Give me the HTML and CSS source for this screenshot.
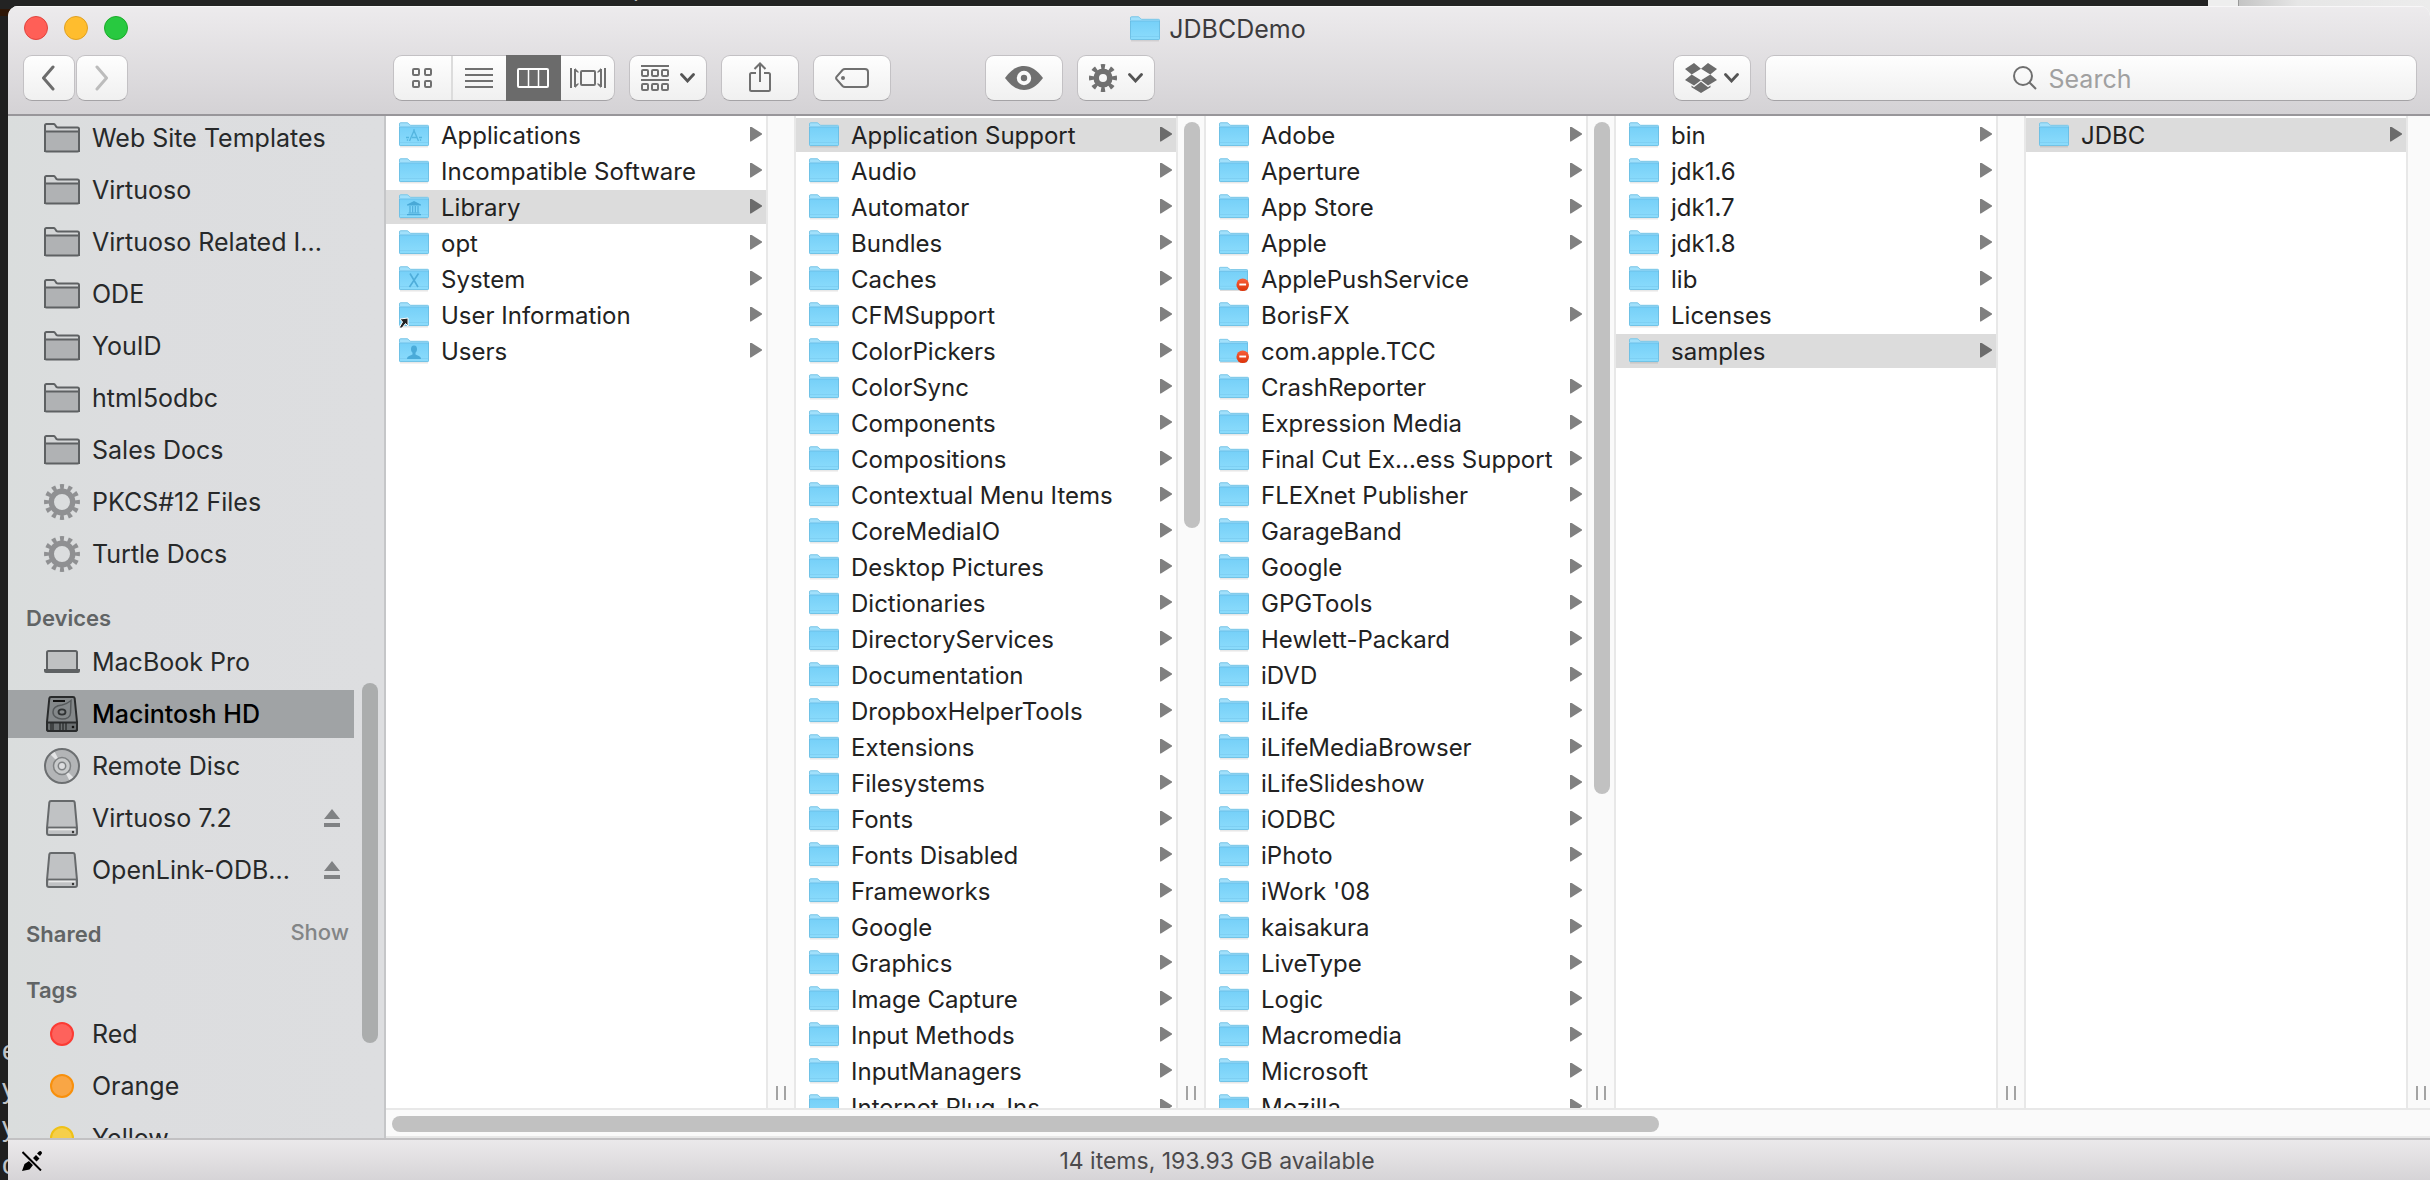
FILE: index.html
```html
<!DOCTYPE html>
<html lang="en">
<head>
<meta charset="utf-8">
<title>JDBCDemo</title>
<link rel="stylesheet" href="styles.css">
</head>
<body>
<svg class="symbols" aria-hidden="true">
  <defs>
    <linearGradient id="sky" x1="0" y1="0" x2="0" y2="1"><stop offset="0" stop-color="#76d0f8"/><stop offset="1" stop-color="#8cdcfc"/></linearGradient>
    <linearGradient id="alert" x1="0" y1="0" x2="0" y2="1"><stop offset="0" stop-color="#f9603a"/><stop offset="1" stop-color="#dc3208"/></linearGradient>
  </defs>
  <symbol id="folder" viewBox="0 0 30 26">
    <path d="M1 24.5h28v.8H1z" fill="#000" opacity=".18"/>
    <path d="M0 2Q0 .5 1.500 .5H8q1 0 1.700.8L11 2.700q.4.3 1 .3h16.500Q30 3 30 4.500V22H0z" fill="#a1e0fb"/>
    <path d="M.5 4V2Q.5.8 1.600.8H8q.8 0 1.400.6L10.700 2.800q.5.500 1.200.5H28.500q1 0 1 1.200" fill="none" stroke="#7cc6e6"/>
    <path d="M0 5h30v17.500q0 1.500-1.500 1.500h-27Q0 24 0 22.500z" fill="url(#sky)"/>
    <path d="M0 5h30" stroke="#6cc0e8"/>
    <path d="M.5 5v17.500q0 1 1 1h27q1 0 1-1V5" fill="none" stroke="#66b8dd" opacity=".7"/>
    <path d="M1 20.500h28" stroke="#7accf1" opacity=".7"/>
  </symbol>
  <symbol id="folder-apps" viewBox="0 0 30 26"><use href="#folder" width="30" height="26"/><path d="M10.500 19 15.500 7.500M14.500 7.500 19.500 19M7 15.500h3M13 15.500h5M20 15.500h3M8 18.500l1-1M22 18.500l-1-1" stroke="#55b6e0" stroke-width="1.400" fill="none"/></symbol>
  <symbol id="folder-library" viewBox="0 0 30 26"><use href="#folder" width="30" height="26"/><path d="M8 10.500 15 7l7 3.500v1H8zM9.500 18.500h11v1h-11zM8 20h14v1.200H8z" fill="#49a9d7"/><path d="M11 12v6.500M13.700 12v6.500M16.300 12v6.500M19 12v6.500" stroke="#49a9d7" stroke-width="1.100"/></symbol>
  <symbol id="folder-system" viewBox="0 0 30 26"><use href="#folder" width="30" height="26"/><path d="M11 7.500l8 13.500M19.500 7.500l-9 13.500" stroke="#4fadda" stroke-width="1.600"/></symbol>
  <symbol id="folder-alias" viewBox="0 0 30 26"><use href="#folder" width="30" height="26"/><path d="M1 17l8-1v8l-2.500-2.500L3 26H0l3.500-6z" fill="#222" stroke="#fff" stroke-width="1"/></symbol>
  <symbol id="folder-users" viewBox="0 0 30 26"><use href="#folder" width="30" height="26"/><path d="M15 7.500c2.200 0 3 1.600 3 3.500 0 1.700-.6 2.800-1.500 3.700v1.800c1.500 1 5.500 1.200 5.500 4.500H8c0-3.300 4-3.500 5.500-4.500v-1.800C12.600 13.800 12 12.700 12 11c0-1.900.8-3.500 3-3.500z" fill="#4aabd9"/></symbol>
  <symbol id="folder-locked" viewBox="0 0 31 26"><use href="#folder" width="30" height="26"/><circle cx="24.500" cy="19" r="6.500" fill="url(#alert)"/><path d="M21 18.700h7" stroke="#fff" stroke-width="2"/></symbol>
  <symbol id="side-folder" viewBox="0 0 36 30">
    <path d="M1 28V2.500Q1 1 2.500 1h7q1 0 1.500.8L12.500 4q.5.500 1.500.5h19.500q1.500 0 1.500 1.500v22z" fill="#d3d5d6" stroke="#5e6163" stroke-width="2"/>
    <path d="M1 8.500h34V27q0 1.500-1.500 1.500h-31Q1 28.500 1 27z" fill="#b0b2b4" stroke="#5e6163" stroke-width="2"/>
  </symbol>
  <symbol id="side-gear" viewBox="0 0 36 36">
    <circle cx="18" cy="18" r="10.700" fill="none" stroke="#8f9092" stroke-width="5.400"/>
    <circle cx="18" cy="18" r="15.200" fill="none" stroke="#8f9092" stroke-width="5.500" pathLength="24" stroke-dasharray="1 1" stroke-dashoffset=".5"/>
  </symbol>
  <symbol id="laptop" viewBox="0 0 36 24"><rect x="3" y="1" width="30" height="19" rx="1.500" fill="#bfc1c2" stroke="#5e6163" stroke-width="2"/><path d="M0 19h36v2q0 2-2 2H2q-2 0-2-2z" fill="#5e6163"/></symbol>
  <symbol id="hard-disk" viewBox="0 0 32 36">
    <path d="M5 1h22q1.500 0 1.700 1.500L31 26v7q0 2-2 2H3q-2 0-2-2v-7L3.300 2.500Q3.500 1 5 1z" fill="#84888a" stroke="#292b2c" stroke-width="2"/>
    <path d="M1 26.500h30V33q0 2-2 2H3q-2 0-2-2z" fill="#6b6f71" stroke="#292b2c" stroke-width="2"/>
    <path d="M7 5h12" stroke="#111" stroke-width="2"/>
    <path d="M25 4.500 24.500 17c0 4-4 6-8.500 6s-9-2.500-9-7 4-6.500 9-7c3-.5 5-1.500 9-4.500z" fill="none" stroke="#55595b" stroke-width="1.500"/>
    <ellipse cx="16" cy="16" rx="3.500" ry="2.700" fill="none" stroke="#303334" stroke-width="1.800"/>
    <path d="M5 27v7M7 27v7M14 27v7M17 27v7M20 27v7" stroke="#292b2c" stroke-width="1.300"/><circle cx="27" cy="31" r="1.300" fill="#151515"/>
  </symbol>
  <symbol id="disc" viewBox="0 0 36 36">
    <circle cx="18" cy="18" r="17" fill="#b3b5b7"/>
    <path d="M18 18 6 6l4-3.500zM18 18l12 12-4 3.500z" fill="#e3e4e5"/>
    <circle cx="18" cy="18" r="17" fill="none" stroke="#6c6f71" stroke-width="2"/>
    <circle cx="18" cy="18" r="8.500" fill="#c9cbcc" stroke="#7e8183" stroke-width="1.500"/><circle cx="18" cy="18" r="3.700" fill="#dcdddf" stroke="#7e8183" stroke-width="1.500"/>
  </symbol>
  <symbol id="drive" viewBox="0 0 32 36">
    <path d="M5 1h22q1.500 0 1.700 1.500L31 28v5q0 2-2 2H3q-2 0-2-2v-5L3.300 2.500Q3.500 1 5 1z" fill="#c0c2c4" stroke="#66696b" stroke-width="2"/>
    <path d="M2 27.500h28" stroke="#66696b" stroke-width="1.800"/><path d="M3 29.500h26" stroke="#e9eaea" stroke-width="1.600"/><circle cx="27" cy="32" r="1.200" fill="#333"/>
  </symbol>
  <symbol id="eject" viewBox="0 0 16 18"><path d="M8 0l8 10H0zM0 14h16v4H0z" fill="#808284"/></symbol>
  <symbol id="chevron" viewBox="0 0 15 10"><path d="M1.500 1.500l6 6.500 6-6.500" fill="none" stroke="#555" stroke-width="2.800" stroke-linecap="round"/></symbol>
</svg>

<div class="desktop" aria-hidden="true">
  <div class="backdrop-pane"></div>
  <p class="terminal-top">p</p>
  <p class="terminal-text">e<br>y<br>y<br>c</p>
</div>

<main class="window">
  <header class="titlebar">
    <div class="title-row">
      <div class="lights">
        <button class="light close" aria-label="Close"></button>
        <button class="light minimize" aria-label="Minimize"></button>
        <button class="light maximize" aria-label="Zoom"></button>
      </div>
      <h1 class="title"><svg class="folder" viewBox="0 0 30 26"><use href="#folder"/></svg>JDBCDemo</h1>
    </div>
    <div class="toolbar">
      <div class="history">
        <button class="btn back" aria-label="Back"><svg width="14" height="26" viewBox="0 0 14 26"><path d="M12 2 2.500 13 12 24" fill="none" stroke="#6c6c6c" stroke-width="3" stroke-linecap="round" stroke-linejoin="round"/></svg></button>
        <button class="btn forward" aria-label="Forward"><svg width="14" height="26" viewBox="0 0 14 26"><path d="M2 2l9.500 11L2 24" fill="none" stroke="#bcbcbc" stroke-width="3" stroke-linecap="round" stroke-linejoin="round"/></svg></button>
      </div>
      <div class="views">
        <button class="view icons" aria-label="Icons"><svg width="20" height="20" viewBox="0 0 20 20" fill="none" stroke="#707070" stroke-width="2"><rect x="1" y="1" width="6" height="6" rx="1"/><rect x="13" y="1" width="6" height="6" rx="1"/><rect x="1" y="13" width="6" height="6" rx="1"/><rect x="13" y="13" width="6" height="6" rx="1"/></svg></button>
        <button class="view" aria-label="List"><svg width="28" height="20" viewBox="0 0 28 20"><path d="M0 1h28M0 7h28M0 13h28M0 19h28" stroke="#707070" stroke-width="2"/></svg></button>
        <button class="view active" aria-label="Columns" aria-pressed="true"><svg width="32" height="20" viewBox="0 0 32 20"><rect x="1" y="1" width="30" height="18" rx="1" fill="none" stroke="#fff" stroke-width="2"/><path d="M11.500 1v18M21.500 1v18" stroke="#fff" stroke-width="1.500"/></svg></button>
        <button class="view" aria-label="Cover Flow"><svg width="36" height="20" viewBox="0 0 36 20"><path d="M1 0v20M35 0v20M5 1v18M31 1v18" stroke="#707070" stroke-width="2"/><path d="M5 0l3.500 3.500V5L5 3zM5 20l3.500-3.500V15L5 17zM31 0l-3.500 3.500V5L31 3zM31 20l-3.500-3.500V15L31 17z" fill="#707070"/><rect x="11" y="3" width="14" height="14" rx="1" fill="none" stroke="#707070" stroke-width="2"/></svg></button>
      </div>
      <button class="btn" aria-label="Arrange"><svg width="28" height="26" viewBox="0 0 28 26" fill="none" stroke="#707070" stroke-width="2"><path d="M0 1h28M0 15h28"/><rect x="1" y="5" width="6" height="6" rx="1"/><rect x="11" y="5" width="6" height="6" rx="1"/><rect x="21" y="5" width="6" height="6" rx="1"/><rect x="1" y="19" width="6" height="6" rx="1"/><rect x="11" y="19" width="6" height="6" rx="1"/><rect x="21" y="19" width="6" height="6" rx="1"/></svg><svg class="chevron"><use href="#chevron"/></svg></button>
      <button class="btn" aria-label="Share"><svg width="22" height="32" viewBox="0 0 22 32" fill="none" stroke="#707070" stroke-width="2"><path d="M7 11H2.500Q1 11 1 12.500v15Q1 29 2.500 29h17q1.500 0 1.500-1.500v-15Q21 11 19.500 11H15M11 20V1.500M5.500 7 11 1.500 16.500 7"/></svg></button>
      <button class="btn" aria-label="Tags"><svg width="34" height="20" viewBox="0 0 34 20" fill="none" stroke="#707070" stroke-width="2"><path d="M10 1h20q3 0 3 3v12q0 3-3 3H10q-1.500 0-2.500-1L1.500 11.200q-.8-1.200 0-2.400L7.500 2Q8.500 1 10 1z"/><circle cx="8" cy="10" r="2" fill="#707070" stroke="none"/></svg></button>
      <button class="btn quicklook" aria-label="Quick Look"><svg width="38" height="24" viewBox="0 0 38 24"><path d="M0 12C6 4 12 0 19 0s13 4 19 12c-6 8-12 12-19 12S6 20 0 12z" fill="#707070"/><circle cx="19" cy="12" r="5.200" fill="none" stroke="#fafafa" stroke-width="4"/></svg></button>
      <button class="btn" aria-label="Action"><svg width="28" height="28" viewBox="0 0 28 28" fill="none" stroke="#707070"><circle cx="14" cy="14" r="6.800" stroke-width="5.600"/><circle cx="14" cy="14" r="11.300" stroke-width="5.400" pathLength="16" stroke-dasharray=".9 1.100" stroke-dashoffset=".45"/></svg><svg class="chevron"><use href="#chevron"/></svg></button>
      <button class="btn dropbox" aria-label="Dropbox"><svg width="32" height="30" viewBox="0 0 32 30" fill="#6b6b6b"><path d="M9 0l7 5.700L6.700 11.500 0 6zM23 0l-7 5.700 9.300 5.800L32 6zM0 17l6.700-5.500L16 17.200 9 22.500zM32 17l-6.700-5.500L16 17.200l7 5.300zM16 18.800l7 5.400 2.500-1.700v1.700L16 30l-9.500-5.800v-1.700L9 24.200z"/></svg><svg class="chevron"><use href="#chevron"/></svg></button>
      <label class="search"><svg width="24" height="24" viewBox="0 0 24 24" fill="none" stroke="#6f6f6f" stroke-width="2"><circle cx="10" cy="10" r="9"/><path d="M16.500 16.500 23 23"/></svg><input type="search" placeholder="Search" aria-label="Search"></label>
    </div>
  </header>

  <div class="content">
    <aside class="sidebar">
      <nav class="side-list">
        <a class="side-row" href="#"><span class="slot"><svg width="36" height="30"><use href="#side-folder"/></svg></span>Web Site Templates</a>
        <a class="side-row" href="#"><span class="slot"><svg width="36" height="30"><use href="#side-folder"/></svg></span>Virtuoso</a>
        <a class="side-row" href="#"><span class="slot"><svg width="36" height="30"><use href="#side-folder"/></svg></span>Virtuoso Related I...</a>
        <a class="side-row" href="#"><span class="slot"><svg width="36" height="30"><use href="#side-folder"/></svg></span>ODE</a>
        <a class="side-row" href="#"><span class="slot"><svg width="36" height="30"><use href="#side-folder"/></svg></span>YouID</a>
        <a class="side-row" href="#"><span class="slot"><svg width="36" height="30"><use href="#side-folder"/></svg></span>html5odbc</a>
        <a class="side-row" href="#"><span class="slot"><svg width="36" height="30"><use href="#side-folder"/></svg></span>Sales Docs</a>
        <a class="side-row" href="#"><span class="slot"><svg width="36" height="36"><use href="#side-gear"/></svg></span>PKCS#12 Files</a>
        <a class="side-row" href="#"><span class="slot"><svg width="36" height="36"><use href="#side-gear"/></svg></span>Turtle Docs</a>
        <h2 class="side-head">Devices</h2>
        <a class="side-row" href="#"><span class="slot"><svg width="36" height="24"><use href="#laptop"/></svg></span>MacBook Pro</a>
        <a class="side-row current" href="#" aria-current="true"><span class="slot"><svg width="32" height="36"><use href="#hard-disk"/></svg></span>Macintosh HD</a>
        <a class="side-row" href="#"><span class="slot"><svg width="36" height="36"><use href="#disc"/></svg></span>Remote Disc</a>
        <a class="side-row" href="#"><span class="slot"><svg width="32" height="36"><use href="#drive"/></svg></span>Virtuoso 7.2<svg class="eject"><use href="#eject"/></svg></a>
        <a class="side-row" href="#"><span class="slot"><svg width="32" height="36"><use href="#drive"/></svg></span>OpenLink-ODB...<svg class="eject"><use href="#eject"/></svg></a>
        <h2 class="side-head">Shared <button class="show">Show</button></h2>
        <h2 class="side-head">Tags</h2>
        <a class="side-row" href="#"><span class="slot"><i class="tag red"></i></span>Red</a>
        <a class="side-row" href="#"><span class="slot"><i class="tag orange"></i></span>Orange</a>
        <a class="side-row" href="#"><span class="slot"><i class="tag yellow"></i></span>Yellow</a>
      </nav>
      <div class="side-track"><div class="thumb"></div></div>
    </aside>

    <div class="browser">
      <div class="columns">
        <div class="column">
          <a class="row" href="#"><svg class="folder"><use href="#folder-apps"/></svg>Applications</a>
          <a class="row" href="#"><svg class="folder"><use href="#folder"/></svg>Incompatible Software</a>
          <a class="row selected" href="#"><svg class="folder"><use href="#folder-library"/></svg>Library</a>
          <a class="row" href="#"><svg class="folder"><use href="#folder"/></svg>opt</a>
          <a class="row" href="#"><svg class="folder"><use href="#folder-system"/></svg>System</a>
          <a class="row" href="#"><svg class="folder"><use href="#folder-alias"/></svg>User Information</a>
          <a class="row" href="#"><svg class="folder"><use href="#folder-users"/></svg>Users</a>
        </div>
        <div class="gutter"><span class="grip"></span></div>

        <div class="column">
          <a class="row selected" href="#"><svg class="folder"><use href="#folder"/></svg>Application Support</a>
          <a class="row" href="#"><svg class="folder"><use href="#folder"/></svg>Audio</a>
          <a class="row" href="#"><svg class="folder"><use href="#folder"/></svg>Automator</a>
          <a class="row" href="#"><svg class="folder"><use href="#folder"/></svg>Bundles</a>
          <a class="row" href="#"><svg class="folder"><use href="#folder"/></svg>Caches</a>
          <a class="row" href="#"><svg class="folder"><use href="#folder"/></svg>CFMSupport</a>
          <a class="row" href="#"><svg class="folder"><use href="#folder"/></svg>ColorPickers</a>
          <a class="row" href="#"><svg class="folder"><use href="#folder"/></svg>ColorSync</a>
          <a class="row" href="#"><svg class="folder"><use href="#folder"/></svg>Components</a>
          <a class="row" href="#"><svg class="folder"><use href="#folder"/></svg>Compositions</a>
          <a class="row" href="#"><svg class="folder"><use href="#folder"/></svg>Contextual Menu Items</a>
          <a class="row" href="#"><svg class="folder"><use href="#folder"/></svg>CoreMediaIO</a>
          <a class="row" href="#"><svg class="folder"><use href="#folder"/></svg>Desktop Pictures</a>
          <a class="row" href="#"><svg class="folder"><use href="#folder"/></svg>Dictionaries</a>
          <a class="row" href="#"><svg class="folder"><use href="#folder"/></svg>DirectoryServices</a>
          <a class="row" href="#"><svg class="folder"><use href="#folder"/></svg>Documentation</a>
          <a class="row" href="#"><svg class="folder"><use href="#folder"/></svg>DropboxHelperTools</a>
          <a class="row" href="#"><svg class="folder"><use href="#folder"/></svg>Extensions</a>
          <a class="row" href="#"><svg class="folder"><use href="#folder"/></svg>Filesystems</a>
          <a class="row" href="#"><svg class="folder"><use href="#folder"/></svg>Fonts</a>
          <a class="row" href="#"><svg class="folder"><use href="#folder"/></svg>Fonts Disabled</a>
          <a class="row" href="#"><svg class="folder"><use href="#folder"/></svg>Frameworks</a>
          <a class="row" href="#"><svg class="folder"><use href="#folder"/></svg>Google</a>
          <a class="row" href="#"><svg class="folder"><use href="#folder"/></svg>Graphics</a>
          <a class="row" href="#"><svg class="folder"><use href="#folder"/></svg>Image Capture</a>
          <a class="row" href="#"><svg class="folder"><use href="#folder"/></svg>Input Methods</a>
          <a class="row" href="#"><svg class="folder"><use href="#folder"/></svg>InputManagers</a>
          <a class="row" href="#"><svg class="folder"><use href="#folder"/></svg>Internet Plug-Ins</a>
        </div>
        <div class="gutter"><div class="thumb second"></div><span class="grip"></span></div>

        <div class="column">
          <a class="row" href="#"><svg class="folder"><use href="#folder"/></svg>Adobe</a>
          <a class="row" href="#"><svg class="folder"><use href="#folder"/></svg>Aperture</a>
          <a class="row" href="#"><svg class="folder"><use href="#folder"/></svg>App Store</a>
          <a class="row" href="#"><svg class="folder"><use href="#folder"/></svg>Apple</a>
          <a class="row locked" href="#"><svg class="folder"><use href="#folder-locked"/></svg>ApplePushService</a>
          <a class="row" href="#"><svg class="folder"><use href="#folder"/></svg>BorisFX</a>
          <a class="row locked" href="#"><svg class="folder"><use href="#folder-locked"/></svg>com.apple.TCC</a>
          <a class="row" href="#"><svg class="folder"><use href="#folder"/></svg>CrashReporter</a>
          <a class="row" href="#"><svg class="folder"><use href="#folder"/></svg>Expression Media</a>
          <a class="row" href="#"><svg class="folder"><use href="#folder"/></svg>Final Cut Ex...ess Support</a>
          <a class="row" href="#"><svg class="folder"><use href="#folder"/></svg>FLEXnet Publisher</a>
          <a class="row" href="#"><svg class="folder"><use href="#folder"/></svg>GarageBand</a>
          <a class="row" href="#"><svg class="folder"><use href="#folder"/></svg>Google</a>
          <a class="row" href="#"><svg class="folder"><use href="#folder"/></svg>GPGTools</a>
          <a class="row" href="#"><svg class="folder"><use href="#folder"/></svg>Hewlett-Packard</a>
          <a class="row" href="#"><svg class="folder"><use href="#folder"/></svg>iDVD</a>
          <a class="row" href="#"><svg class="folder"><use href="#folder"/></svg>iLife</a>
          <a class="row" href="#"><svg class="folder"><use href="#folder"/></svg>iLifeMediaBrowser</a>
          <a class="row" href="#"><svg class="folder"><use href="#folder"/></svg>iLifeSlideshow</a>
          <a class="row" href="#"><svg class="folder"><use href="#folder"/></svg>iODBC</a>
          <a class="row" href="#"><svg class="folder"><use href="#folder"/></svg>iPhoto</a>
          <a class="row" href="#"><svg class="folder"><use href="#folder"/></svg>iWork '08</a>
          <a class="row" href="#"><svg class="folder"><use href="#folder"/></svg>kaisakura</a>
          <a class="row" href="#"><svg class="folder"><use href="#folder"/></svg>LiveType</a>
          <a class="row" href="#"><svg class="folder"><use href="#folder"/></svg>Logic</a>
          <a class="row" href="#"><svg class="folder"><use href="#folder"/></svg>Macromedia</a>
          <a class="row" href="#"><svg class="folder"><use href="#folder"/></svg>Microsoft</a>
          <a class="row" href="#"><svg class="folder"><use href="#folder"/></svg>Mozilla</a>
        </div>
        <div class="gutter"><div class="thumb third"></div><span class="grip"></span></div>

        <div class="column">
          <a class="row" href="#"><svg class="folder"><use href="#folder"/></svg>bin</a>
          <a class="row" href="#"><svg class="folder"><use href="#folder"/></svg>jdk1.6</a>
          <a class="row" href="#"><svg class="folder"><use href="#folder"/></svg>jdk1.7</a>
          <a class="row" href="#"><svg class="folder"><use href="#folder"/></svg>jdk1.8</a>
          <a class="row" href="#"><svg class="folder"><use href="#folder"/></svg>lib</a>
          <a class="row" href="#"><svg class="folder"><use href="#folder"/></svg>Licenses</a>
          <a class="row selected" href="#"><svg class="folder"><use href="#folder"/></svg>samples</a>
        </div>
        <div class="gutter"><span class="grip"></span></div>

        <div class="column">
          <a class="row selected" href="#"><svg class="folder"><use href="#folder"/></svg>JDBC</a>
        </div>
        <div class="gutter"><span class="grip"></span></div>
      </div>
      <div class="scrollbar"><div class="thumb"></div></div>
    </div>
  </div>

  <footer class="statusbar">
    <svg class="readonly" viewBox="0 0 20 20"><path d="M0 20l2.500-7 4.500-3 4 4-3.500 4.500zM11 7l3-3 3.500 3.500-3 3zM15 2.500 17 .500q1.500-1 2.500.3t0 2.200L18 5z" fill="#000"/><path d="M1 1l18.500 18.500" stroke="#e4e0e2" stroke-width="4"/><path d="M.5 1l18.500 18.500" stroke="#000" stroke-width="2"/></svg>
    <span class="status">14 items, 193.93 GB available</span>
  </footer>
</main>
</body>
</html>
```
FILE: styles.css
```css
* { box-sizing: border-box; }

body {
  margin: 0;
  height: 100vh;
  overflow: hidden;
  background: #1f1f1f;
  font-family: Inter, "Liberation Sans", sans-serif;
  font-size: 24px;
  color: #222;
}

button, input { font: inherit; color: inherit; margin: 0; padding: 0; border: 0; background: none; }
a { color: inherit; text-decoration: none; }
h1, h2, p { margin: 0; font-weight: 400; }
svg { display: block; flex: none; }
.symbols { position: absolute; width: 0; height: 0; }

/* What shows behind the window */
.desktop {
  position: absolute;
  inset: 0;
  overflow: hidden;
  background: linear-gradient(#232323 9px, #2e1606 9px, #2e1606 16px, #1f1f1f 16px);
}
.backdrop-pane {
  position: absolute;
  top: 0;
  right: 0;
  width: 222px;
  height: 20px;
  background: linear-gradient(90deg, #eee 30px, #999 30px, #999 31px, #c4c4c4 31px, #e6e6e6 90px, #ececec);
}
.terminal-top { position: absolute; top: -30px; left: 633px; line-height: 36px; color: #ddd; }
.terminal-text {
  position: absolute;
  left: 2px;
  bottom: -4px;
  font: 28px/38px "Liberation Sans", sans-serif;
  color: #bfc3c8;
}

.window {
  position: relative;
  display: flex;
  flex-direction: column;
  height: calc(100vh - 6px);
  margin: 6px 0 0 8px;
  border-radius: 10px 10px 0 0;
  overflow: hidden;
  background: #fff;
}

/* Title bar and toolbar */
.titlebar {
  flex: none;
  background: linear-gradient(#edebed, #d4d2d5);
  border-bottom: 2px solid #98969a;
  box-shadow: inset 0 1px #f8f7f8;
}
.title-row {
  display: grid;
  grid-template-columns: 1fr auto 1fr;
  align-items: center;
  height: 44px;
  padding-right: 2px;
}
.lights { display: flex; gap: 16px; padding-left: 16px; }
.light { width: 24px; height: 24px; border-radius: 50%; border: 1px solid #e0443e; background: #ff5f57; }
.minimize { border-color: #dfa023; background: #ffbd2e; }
.maximize { border-color: #1aab29; background: #28c940; }
.title { display: flex; align-items: center; gap: 9px; font-size: 25px; line-height: 32px; padding-top: 1px; color: #3c3b3d; }

.toolbar { display: flex; gap: 14px; padding: 5px 13px 13px 15px; }
.toolbar .chevron { width: 15px; height: 10px; }
.btn, .search, .views {
  height: 46px;
  border: 1px solid #c3c1c4;
  border-bottom-color: #a5a3a6;
  border-radius: 9px;
  background: linear-gradient(#fefefe, #f0f0f0);
}
.btn {
  display: flex;
  align-items: center;
  justify-content: center;
  gap: 11px;
  width: 78px;
}
.history { display: flex; gap: 1px; margin-right: 251px; }
.history .btn { width: 52px; }
.back { padding-right: 3px; }
.views { display: flex; width: 222px; }
.view { display: flex; flex: 53; align-items: center; justify-content: center; }
.icons { flex: 57; border-right: 2px solid #dcdcdc; }
.view.active { flex: 56; margin: -1px 0; background: #6b6b6b; }
.quicklook { margin-left: 80px; }
.dropbox { margin-left: auto; gap: 7px; }
.search {
  display: flex;
  align-items: center;
  justify-content: center;
  gap: 12px;
  width: 652px;
  padding-left: 1px;
  font-size: 25px;
}
.search input { width: 122px; padding-top: 1px; outline: 0; appearance: none; }
.search input::placeholder { color: #a0a0a0; opacity: 1; }

/* Sidebar */
.content { display: flex; flex: 1; min-height: 0; }
.sidebar {
  display: flex;
  flex: none;
  width: 378px;
  overflow: hidden;
  border-right: 2px solid #c5c6c8;
  background: linear-gradient(90deg, #dadddd, #dcdddf 30%, #dddee0);
}
.side-list { flex: 1; min-width: 0; margin-top: -4px; }
.side-row {
  display: flex;
  align-items: center;
  gap: 12px;
  height: 48px;
  margin: 2px 0;
  padding: 0 14px 0 36px;
  font-size: 25px;
  line-height: 32px;
  color: #27292a;
}
.side-row:first-child { margin-top: 0; padding-top: 2px; height: 50px; }
.side-row + .side-row { margin-top: 4px; }
.side-row.current { background: #a0a3a5; color: #000; font-weight: 500; }
.slot { display: flex; flex: none; justify-content: center; width: 36px; }
.eject { width: 16px; height: 18px; margin-left: auto; }
.side-head {
  display: flex;
  justify-content: space-between;
  height: 56px;
  padding: 20px 5px 0 18px;
  font-size: 22px;
  font-weight: 600;
  line-height: 36px;
  color: #616465;
}
.show { height: 32px; line-height: 32px; color: #838586; font-weight: 500; }
.tag { width: 24px; height: 24px; border-radius: 50%; border: 2px solid; }
.red { border-color: #fb3b34; background: #fe625c; }
.orange { border-color: #f8900c; background: #f9a645; }
.yellow { border-color: #efc116; background: #f5cf4b; }

.thumb { width: 16px; border-radius: 8px; background: #c1c1c1; }
.side-track { display: flex; flex-direction: column; flex: none; width: 30px; padding-left: 8px; }
.side-track::before { content: ""; flex: 567; }
.side-track .thumb { flex: 360; background: #abadad; }
.side-track::after { content: ""; flex: 95; }

/* Column browser */
.browser { display: flex; flex-direction: column; flex: 1; min-width: 0; }
.columns { display: flex; flex: 1; min-height: 0; overflow: hidden; }
.column { flex: none; width: 380px; padding-top: 2px; overflow: hidden; }
.row {
  display: flex;
  align-items: center;
  gap: 12px;
  height: 34px;
  margin-bottom: 2px;
  padding: 0 4px 0 13px;
  white-space: nowrap;
}
.folder { width: 30px; height: 26px; }
.row::after {
  content: "";
  width: 12px;
  height: 15px;
  margin: 0 0 2px auto;
  background: #808080;
  clip-path: polygon(0 0, 8% 0, 100% 46%, 100% 54%, 8% 100%, 0 100%);
}
.row.selected { background: #dcdcdc; }
.row.selected::after { background: #6c6c6c; }
.row.locked::after { content: none; }

.gutter {
  display: flex;
  flex: none;
  flex-direction: column;
  align-items: center;
  width: 30px;
  padding: 6px 0 8px;
  border: solid #e8e8e8;
  border-width: 0 2px;
  background: #fafafa;
}
.gutter .thumb { margin-left: 2px; }
.second { height: 406px; }
.third { height: 672px; }
.grip { width: 10px; height: 14px; margin-top: auto; border: solid #a3a3a3; border-width: 0 2px; }

.scrollbar {
  display: flex;
  flex: none;
  height: 30px;
  padding: 6px;
  border: solid #e8e8e8;
  border-width: 2px 0;
  background: #fafafa;
}
.scrollbar .thumb { flex: 1267; height: 16px; }
.scrollbar::after { content: ""; flex: 765; }

/* Status bar */
.statusbar {
  display: grid;
  flex: none;
  grid-template-columns: 1fr auto 1fr;
  align-items: center;
  height: 42px;
  padding: 2px 18px 0 14px;
  border-top: 2px solid #c2c1c3;
  background: linear-gradient(#ebe9eb, #d6d4d7);
}
.readonly { width: 20px; height: 20px; }
.status { font-size: 23px; color: #4b4a4c; }
```
